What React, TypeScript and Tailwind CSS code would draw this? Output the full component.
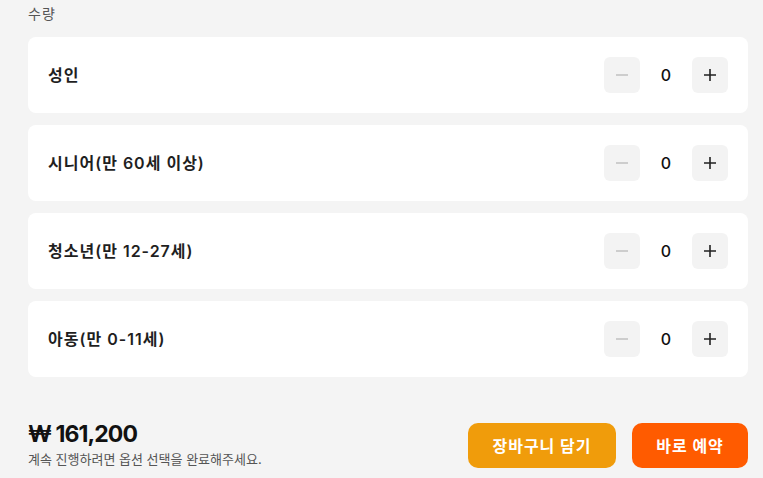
import { useState } from "react";

const ROWS = [
  { id: "adult", label: "성인" },
  { id: "senior", label: "시니어(만 60세 이상)" },
  { id: "youth", label: "청소년(만 12-27세)" },
  { id: "child", label: "아동(만 0-11세)" },
];

function Counter({ value, onChange }: { value: number; onChange: (v: number) => void }) {
  const disabled = value <= 0;
  return (
    <div className="flex items-center">
      <button
        onClick={() => onChange(Math.max(0, value - 1))}
        className="w-9 h-9 rounded-md bg-[#f3f3f3] flex items-center justify-center"
      >
        <svg width="14" height="14" viewBox="0 0 14 14">
          <path d="M1 7h12" stroke={disabled ? "#c4c4c4" : "#222"} strokeWidth="1.6" />
        </svg>
      </button>
      <span className="w-[52px] text-center text-[16px] font-medium text-[#111]">{value}</span>
      <button
        onClick={() => onChange(value + 1)}
        className="w-9 h-9 rounded-md bg-[#f3f3f3] flex items-center justify-center"
      >
        <svg width="14" height="14" viewBox="0 0 14 14">
          <path d="M1 7h12M7 1v12" stroke="#222" strokeWidth="1.6" />
        </svg>
      </button>
    </div>
  );
}

export default function App() {
  const [counts, setCounts] = useState<Record<string, number>>({
    adult: 0,
    senior: 0,
    youth: 0,
    child: 0,
  });

  return (
    <div
      className="w-[763px] h-[478px] bg-[#f4f4f4] px-7 overflow-hidden"
      style={{ fontFamily: 'Inter, "Noto Sans CJK KR", sans-serif' }}
    >
      <div className="pt-[5px] text-[14px] leading-[18px] tracking-[1px] text-[#555]">수량</div>

      <div className="mt-[14px] flex flex-col gap-3 w-[720px]">
        {ROWS.map((r) => (
          <div
            key={r.id}
            className="h-[76px] bg-white rounded-lg px-5 flex items-center justify-between"
          >
            <span className="text-[16px] font-semibold tracking-[1px] text-[#1f1f1f]">
              {r.label}
            </span>
            <Counter
              value={counts[r.id]}
              onChange={(v) => setCounts({ ...counts, [r.id]: v })}
            />
          </div>
        ))}
      </div>

      <div className="mt-[46px] w-[720px] flex items-start justify-between">
        <div>
          <div className="text-[23px] leading-[22px] font-bold text-[#111] tracking-[-0.04em]">
            ₩ 161,200
          </div>
          <div className="mt-[6px] text-[13px] leading-[16px] text-[#555]">
            계속 진행하려면 옵션 선택을 완료해주세요.
          </div>
        </div>
        <div className="flex gap-4">
          <button className="w-[148px] h-[45px] rounded-[10px] bg-[#f09c0b] text-white text-[16px] font-bold tracking-[1px]">
            장바구니 담기
          </button>
          <button className="w-[116px] h-[45px] rounded-[10px] bg-[#ff5b00] text-white text-[16px] font-bold tracking-[1px]">
            바로 예약
          </button>
        </div>
      </div>
    </div>
  );
}
